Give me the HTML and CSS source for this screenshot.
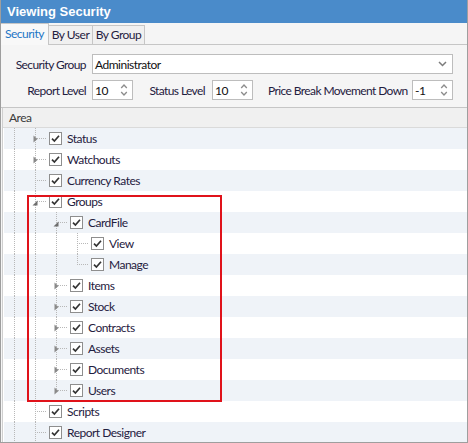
FILE: index.html
```html
<!DOCTYPE html>
<html>
<head>
<meta charset="utf-8">
<link rel="stylesheet" href="styles.css">
</head>
<body>
<div class="window">
  <div class="titlebar">Viewing Security</div>
  <div class="tabs">
    <div class="tab active t1">Security</div>
    <div class="tab t2">By User</div>
    <div class="tab t3">By Group</div>
  </div>
  <div class="panel">
    <div class="frow">
      <label class="lbl-main">Security Group</label>
      <div class="combo">
        <span class="val">Administrator</span>
        <svg class="chev" width="9" height="6" viewBox="0 0 9 6"><path d="M1 1 L4.5 4.5 L8 1" fill="none" stroke="#7c7c7c" stroke-width="1.5"/></svg>
      </div>
    </div>
    <div class="frow">
      <label class="lbl-main">Report Level</label>
      <div class="spin"><span class="val">10</span><svg class="arr" width="8" height="14" viewBox="0 0 8 14"><path d="M1.2 5 L4 2 L6.8 5 M1.2 9 L4 12 L6.8 9" fill="none" stroke="#8c8c8c" stroke-width="1.3"/></svg></div>
      <label class="lbl-status">Status Level</label>
      <div class="spin"><span class="val">10</span><svg class="arr" width="8" height="14" viewBox="0 0 8 14"><path d="M1.2 5 L4 2 L6.8 5 M1.2 9 L4 12 L6.8 9" fill="none" stroke="#8c8c8c" stroke-width="1.3"/></svg></div>
      <label class="lbl-price">Price Break Movement Down</label>
      <div class="spin"><span class="val">-1</span><svg class="arr" width="8" height="14" viewBox="0 0 8 14"><path d="M1.2 5 L4 2 L6.8 5 M1.2 9 L4 12 L6.8 9" fill="none" stroke="#8c8c8c" stroke-width="1.3"/></svg></div>
    </div>
  </div>
  <div class="grid">
    <div class="ghead">Area</div>
    <div class="tree">
      <div class="row alt"><span class="cell v"></span><span class="cell node v"><svg width="5" height="8" viewBox="0 0 5 8"><path d="M0.5 0.5 L4.5 4 L0.5 7.5 Z" fill="#8a8a8a"/></svg></span><span class="chk"><svg width="13" height="13" viewBox="0 0 13 13"><rect x="0.5" y="0.5" width="12" height="12" fill="#fff" stroke="#8e8e8e"/><path d="M3 6.6 L5.4 9 L10 3.8" fill="none" stroke="#333" stroke-width="1.7"/></svg></span><span class="txt">Status</span></div>
      <div class="row"><span class="cell v"></span><span class="cell node v"><svg width="5" height="8" viewBox="0 0 5 8"><path d="M0.5 0.5 L4.5 4 L0.5 7.5 Z" fill="#8a8a8a"/></svg></span><span class="chk"><svg width="13" height="13" viewBox="0 0 13 13"><rect x="0.5" y="0.5" width="12" height="12" fill="#fff" stroke="#8e8e8e"/><path d="M3 6.6 L5.4 9 L10 3.8" fill="none" stroke="#333" stroke-width="1.7"/></svg></span><span class="txt">Watchouts</span></div>
      <div class="row alt"><span class="cell v"></span><span class="cell node v"></span><span class="chk"><svg width="13" height="13" viewBox="0 0 13 13"><rect x="0.5" y="0.5" width="12" height="12" fill="#fff" stroke="#8e8e8e"/><path d="M3 6.6 L5.4 9 L10 3.8" fill="none" stroke="#333" stroke-width="1.7"/></svg></span><span class="txt">Currency Rates</span></div>
      <div class="row"><span class="cell v"></span><span class="cell node v"><svg class="exp" width="6" height="6" viewBox="0 0 6 6"><path d="M5.5 0.5 L5.5 5.5 L0.5 5.5 Z" fill="#6e6e6e"/></svg></span><span class="chk"><svg width="13" height="13" viewBox="0 0 13 13"><rect x="0.5" y="0.5" width="12" height="12" fill="#fff" stroke="#8e8e8e"/><path d="M3 6.6 L5.4 9 L10 3.8" fill="none" stroke="#333" stroke-width="1.7"/></svg></span><span class="txt">Groups</span></div>
      <div class="row alt"><span class="cell v"></span><span class="cell v"></span><span class="cell node v"><svg class="exp" width="6" height="6" viewBox="0 0 6 6"><path d="M5.5 0.5 L5.5 5.5 L0.5 5.5 Z" fill="#6e6e6e"/></svg></span><span class="chk"><svg width="13" height="13" viewBox="0 0 13 13"><rect x="0.5" y="0.5" width="12" height="12" fill="#fff" stroke="#8e8e8e"/><path d="M3 6.6 L5.4 9 L10 3.8" fill="none" stroke="#333" stroke-width="1.7"/></svg></span><span class="txt">CardFile</span></div>
      <div class="row"><span class="cell v"></span><span class="cell v"></span><span class="cell v"></span><span class="cell node v"></span><span class="chk"><svg width="13" height="13" viewBox="0 0 13 13"><rect x="0.5" y="0.5" width="12" height="12" fill="#fff" stroke="#8e8e8e"/><path d="M3 6.6 L5.4 9 L10 3.8" fill="none" stroke="#333" stroke-width="1.7"/></svg></span><span class="txt">View</span></div>
      <div class="row alt"><span class="cell v"></span><span class="cell v"></span><span class="cell v"></span><span class="cell node half"></span><span class="chk"><svg width="13" height="13" viewBox="0 0 13 13"><rect x="0.5" y="0.5" width="12" height="12" fill="#fff" stroke="#8e8e8e"/><path d="M3 6.6 L5.4 9 L10 3.8" fill="none" stroke="#333" stroke-width="1.7"/></svg></span><span class="txt">Manage</span></div>
      <div class="row"><span class="cell v"></span><span class="cell v"></span><span class="cell node v"><svg width="5" height="8" viewBox="0 0 5 8"><path d="M0.5 0.5 L4.5 4 L0.5 7.5 Z" fill="#8a8a8a"/></svg></span><span class="chk"><svg width="13" height="13" viewBox="0 0 13 13"><rect x="0.5" y="0.5" width="12" height="12" fill="#fff" stroke="#8e8e8e"/><path d="M3 6.6 L5.4 9 L10 3.8" fill="none" stroke="#333" stroke-width="1.7"/></svg></span><span class="txt">Items</span></div>
      <div class="row alt"><span class="cell v"></span><span class="cell v"></span><span class="cell node v"><svg width="5" height="8" viewBox="0 0 5 8"><path d="M0.5 0.5 L4.5 4 L0.5 7.5 Z" fill="#8a8a8a"/></svg></span><span class="chk"><svg width="13" height="13" viewBox="0 0 13 13"><rect x="0.5" y="0.5" width="12" height="12" fill="#fff" stroke="#8e8e8e"/><path d="M3 6.6 L5.4 9 L10 3.8" fill="none" stroke="#333" stroke-width="1.7"/></svg></span><span class="txt">Stock</span></div>
      <div class="row"><span class="cell v"></span><span class="cell v"></span><span class="cell node v"><svg width="5" height="8" viewBox="0 0 5 8"><path d="M0.5 0.5 L4.5 4 L0.5 7.5 Z" fill="#8a8a8a"/></svg></span><span class="chk"><svg width="13" height="13" viewBox="0 0 13 13"><rect x="0.5" y="0.5" width="12" height="12" fill="#fff" stroke="#8e8e8e"/><path d="M3 6.6 L5.4 9 L10 3.8" fill="none" stroke="#333" stroke-width="1.7"/></svg></span><span class="txt">Contracts</span></div>
      <div class="row alt"><span class="cell v"></span><span class="cell v"></span><span class="cell node v"><svg width="5" height="8" viewBox="0 0 5 8"><path d="M0.5 0.5 L4.5 4 L0.5 7.5 Z" fill="#8a8a8a"/></svg></span><span class="chk"><svg width="13" height="13" viewBox="0 0 13 13"><rect x="0.5" y="0.5" width="12" height="12" fill="#fff" stroke="#8e8e8e"/><path d="M3 6.6 L5.4 9 L10 3.8" fill="none" stroke="#333" stroke-width="1.7"/></svg></span><span class="txt">Assets</span></div>
      <div class="row"><span class="cell v"></span><span class="cell v"></span><span class="cell node v"><svg width="5" height="8" viewBox="0 0 5 8"><path d="M0.5 0.5 L4.5 4 L0.5 7.5 Z" fill="#8a8a8a"/></svg></span><span class="chk"><svg width="13" height="13" viewBox="0 0 13 13"><rect x="0.5" y="0.5" width="12" height="12" fill="#fff" stroke="#8e8e8e"/><path d="M3 6.6 L5.4 9 L10 3.8" fill="none" stroke="#333" stroke-width="1.7"/></svg></span><span class="txt">Documents</span></div>
      <div class="row alt"><span class="cell v"></span><span class="cell v"></span><span class="cell node half"><svg width="5" height="8" viewBox="0 0 5 8"><path d="M0.5 0.5 L4.5 4 L0.5 7.5 Z" fill="#8a8a8a"/></svg></span><span class="chk"><svg width="13" height="13" viewBox="0 0 13 13"><rect x="0.5" y="0.5" width="12" height="12" fill="#fff" stroke="#8e8e8e"/><path d="M3 6.6 L5.4 9 L10 3.8" fill="none" stroke="#333" stroke-width="1.7"/></svg></span><span class="txt">Users</span></div>
      <div class="row"><span class="cell v"></span><span class="cell node v"></span><span class="chk"><svg width="13" height="13" viewBox="0 0 13 13"><rect x="0.5" y="0.5" width="12" height="12" fill="#fff" stroke="#8e8e8e"/><path d="M3 6.6 L5.4 9 L10 3.8" fill="none" stroke="#333" stroke-width="1.7"/></svg></span><span class="txt">Scripts</span></div>
      <div class="row alt"><span class="cell v"></span><span class="cell node v"></span><span class="chk"><svg width="13" height="13" viewBox="0 0 13 13"><rect x="0.5" y="0.5" width="12" height="12" fill="#fff" stroke="#8e8e8e"/><path d="M3 6.6 L5.4 9 L10 3.8" fill="none" stroke="#333" stroke-width="1.7"/></svg></span><span class="txt">Report Designer</span></div>
    </div>
  </div>
  <div class="highlight"></div>
</div>
</body>
</html>
```

FILE: styles.css
```css
html, body {
  margin: 0;
  padding: 0;
}
body {
  width: 468px;
  height: 443px;
  overflow: hidden;
  font-family: Lato, "Liberation Sans", sans-serif;
  font-size: 12px;
  letter-spacing: -0.5px;
  color: #1f2040;
  background: #f5f5f5;
}
.window {
  position: relative;
  box-sizing: border-box;
  width: 468px;
  height: 443px;
  border: 1px solid #9e9e9e;
  border-top: none;
  display: flex;
  flex-direction: column;
  overflow: hidden;
}
.titlebar {
  height: 23px;
  margin: 0 -1px;
  padding-left: 7px;
  background: #4a8bca;
  color: #fff;
  font-family: "Liberation Sans", Arial, sans-serif;
  font-weight: bold;
  font-size: 13px;
  letter-spacing: 0;
  line-height: 23px;
}
.tabs {
  height: 21px;
  display: flex;
  align-items: flex-end;
}
.tab {
  box-sizing: border-box;
  height: 19px;
  line-height: 18px;
  text-align: center;
  border: 1px solid #c6c6c6;
  border-bottom: none;
  margin-left: -1px;
  background: #f0f0f0;
}
.tab.active {
  height: 22px;
  margin-bottom: -1px;
  line-height: 20px;
  background: #f8f8f8;
  color: #1e76c6;
  border-left: none;
  margin-left: 0;
  z-index: 1;
}
.t1 { width: 48px; }
.t2 { width: 45px; }
.t3 { width: 53px; }
.panel {
  border-top: 1px solid #c6c6c6;
  border-bottom: 1px solid #c6c6c6;
  padding: 9px 0 7px;
  display: flex;
  flex-direction: column;
  gap: 6px;
}
.frow {
  display: flex;
  align-items: center;
  height: 20px;
}
.frow label {
  text-align: right;
  white-space: nowrap;
  letter-spacing: -0.6px;
}
.lbl-main { width: 85px; margin-right: 6px; }
.lbl-status { width: 59px; margin: 0 7px 0 13px; }
.lbl-price { width: 139px; margin: 0 5px 0 15px; letter-spacing: -0.7px; }
.combo, .spin {
  box-sizing: border-box;
  height: 20px;
  background: #fff;
  border: 1px solid #bdbdbd;
  display: flex;
  align-items: center;
  justify-content: space-between;
  padding: 0 4px 0 2px;
}
.combo { width: 361px; padding-right: 5px; }
.spin { width: 41px; }
.val { color: #111; }
.grid {
  flex: 1;
  background: #fff;
  margin-left: 1px;
  border-left: 1px solid #cfcfcf;
  display: flex;
  flex-direction: column;
}
.ghead {
  box-sizing: border-box;
  height: 20px;
  line-height: 19px;
  padding-left: 6px;
  background: #f0f0f0;
  border-bottom: 1px solid #dadada;
  color: #3a3a3a;
}
.tree {
  padding-left: 1px;
}
.row {
  height: 21px;
  display: flex;
  align-items: center;
}
.row.alt { background: #eff3f8; }
.cell {
  width: 21px;
  height: 21px;
  flex: none;
  display: flex;
  align-items: center;
  justify-content: center;
  background-repeat: no-repeat;
}
.cell.v {
  background-image: repeating-linear-gradient(to bottom, #b8b8b8 0 1px, transparent 1px 2px);
  background-position: 10px 0;
  background-size: 1px 21px;
}
.cell.node.v {
  background-image:
    repeating-linear-gradient(to bottom, #b8b8b8 0 1px, transparent 1px 2px),
    repeating-linear-gradient(to right, #b8b8b8 0 1px, transparent 1px 2px);
  background-position: 10px 0, 12px 10px;
  background-size: 1px 21px, 10px 1px;
}
.cell.node.half {
  background-image:
    repeating-linear-gradient(to bottom, #b8b8b8 0 1px, transparent 1px 2px),
    repeating-linear-gradient(to right, #b8b8b8 0 1px, transparent 1px 2px);
  background-position: 10px 0, 12px 10px;
  background-size: 1px 11px, 10px 1px;
}
.cell svg { display: block; }
.cell .exp { margin: 2px 0 0 -1px; }
.chk {
  width: 13px;
  height: 13px;
  margin-left: 3px;
  flex: none;
}
.chk svg { display: block; }
.txt {
  margin-left: 5px;
  white-space: nowrap;
  color: #1f2040;
}
.highlight {
  position: absolute;
  left: 26px;
  top: 195px;
  width: 195px;
  height: 207px;
  box-sizing: border-box;
  border: 2px solid #e0121a;
}
```
